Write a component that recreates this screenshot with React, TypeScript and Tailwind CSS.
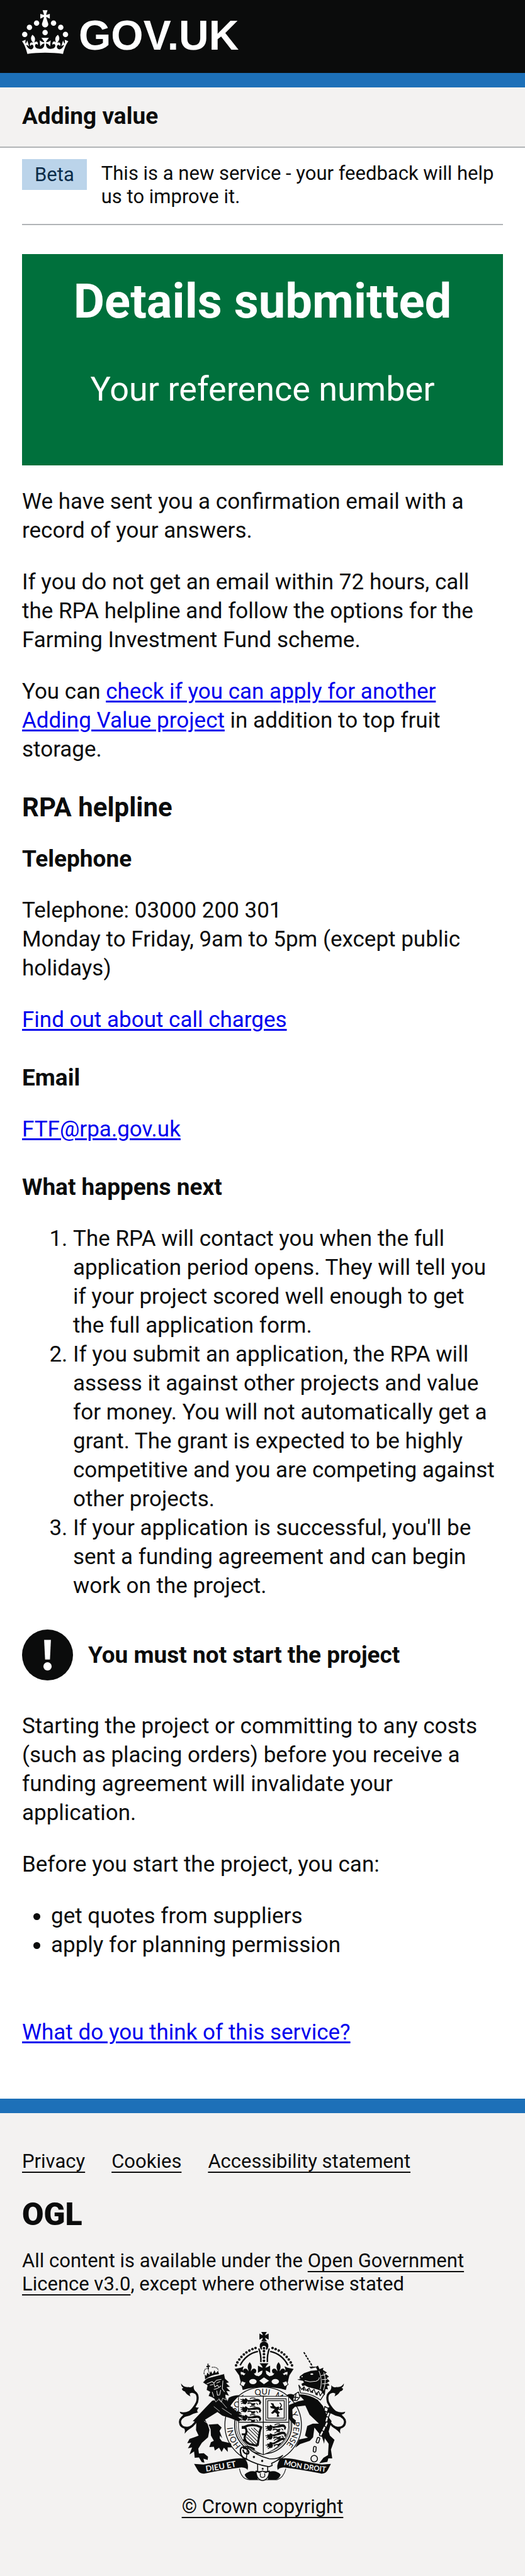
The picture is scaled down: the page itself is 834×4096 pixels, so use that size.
import type { ReactNode } from "react";

const INK = "#0b0c0c";
const PAPER = "#f3f2f1";

function BlueLink({ href, children }: { href: string; children: ReactNode }) {
  return (
    <a href={href} className="text-[#0000ee] underline decoration-[3px] underline-offset-[3px]">
      {children}
    </a>
  );
}

function FooterLink({ href, children }: { href: string; children: ReactNode }) {
  return (
    <a
      href={href}
      className="underline decoration-2 underline-offset-[6px] [text-decoration-skip-ink:none]"
    >
      {children}
    </a>
  );
}

function Crown() {
  return (
    <svg viewBox="0 0 64 60" className="h-[70px] w-[74px] shrink-0" fill="currentColor" aria-hidden="true">
      <circle cx="20" cy="17.6" r="3.7" />
      <circle cx="10.2" cy="23.5" r="3.7" />
      <circle cx="3.7" cy="33.2" r="3.7" />
      <circle cx="31.7" cy="30.6" r="3.7" />
      <circle cx="43.3" cy="17.6" r="3.7" />
      <circle cx="53.2" cy="23.5" r="3.7" />
      <circle cx="59.7" cy="33.2" r="3.7" />
      <path d="M33.1,9.8c.2-.1.3-.3.5-.5l4.6,2.4v-6.8l-4.6,1.5c-.1-.2-.3-.3-.5-.5l1.9-5.9h-6.7l1.9,5.9c-.2.1-.3.3-.5.5l-4.6-1.5v6.8l4.6-2.4c.1.2.3.3.5.5l-2.6,8c-.9,2.8,1.2,5.7,4.1,5.7h0c3,0,5.1-2.9,4.1-5.7l-2.6-8ZM37,37.9s-3.4,3.8-4.1,6.1c2.2,0,4.2-.5,6.4-2.8l-.7,8.5c-2-2.8-4.4-4.1-5.7-3.8.1,3.1.5,6.7,5.8,7.2,3.7.3,6.7-1.5,7-3.8.4-2.6-2-4.3-3.7-1.6-1.4-4.5,2.4-6.1,4.9-3.2-1.9-4.5-1.8-7.7,2.4-10.9,3,4,2.6,7.3-1.2,11.1,2.4-1.3,6.2,0,4,4.6-1.2-2.8-3.7-2.2-4.2.2-.3,1.7.7,3.7,3,4.2,1.9.3,4.7-.9,7-5.9-1.3,0-2.4.7-3.9,1.7l2.4-8c.6,2.3,1.4,3.7,2.2,4.5.6-1.6.5-2.8,0-5.3l5,1.8c-2.6,3.6-5.2,8.7-7.3,17.5-7.4-1.1-15.7-1.7-24.5-1.7h0c-8.8,0-17.1.6-24.5,1.7-2.1-8.9-4.7-13.9-7.3-17.5l5-1.8c-.5,2.5-.6,3.7,0,5.3.8-.8,1.6-2.3,2.2-4.5l2.4,8c-1.5-1-2.6-1.7-3.9-1.7,2.3,5,5.2,6.2,7,5.9,2.3-.4,3.3-2.4,3-4.2-.5-2.4-3-3.1-4.2-.2-2.2-4.6,1.6-6,4-4.6-3.7-3.7-4.2-7.1-1.2-11.1,4.2,3.2,4.3,6.4,2.4,10.9,2.5-2.8,6.3-1.3,4.9,3.2-1.8-2.7-4.1-1-3.7,1.6.3,2.3,3.3,4.1,7,3.8,5.4-.5,5.7-4.2,5.8-7.2-1.3-.2-3.7,1-5.7,3.8l-.7-8.5c2.2,2.3,4.2,2.7,6.4,2.8-.7-2.3-4.1-6.1-4.1-6.1h10.6,0Z" />
    </svg>
  );
}

/* One passant lion of the English quarters, drawn in a 130 x 44 box. */
function Passant({ x, y, tilt = 0 }: { x: number; y: number; tilt?: number }) {
  return (
    <g transform={`translate(${x} ${y}) rotate(${tilt})`}>
      <path d="M14 2 L24 8 L32 0 L44 8 L42 26 L32 38 L18 36 L10 20 Z" />
      <path d="M0 8 L14 12 M2 22 L14 20 M4 34 L18 30" strokeWidth="5" stroke={INK} />
      <path d="M40 10 Q62 16 88 6 Q112 2 122 12 L128 26 L122 40 L114 38 L116 24 L104 20 Q80 24 62 22 L48 26 Z" />
      <path d="M44 34 Q60 26 72 36 L92 34 M66 42 L88 42" fill="none" stroke={INK} strokeWidth="7" />
      <path d="M58 4 Q74 -4 92 2 M98 30 L108 42" fill="none" stroke={INK} strokeWidth="5" />
    </g>
  );
}

function TailPlume() {
  return (
    <g>
      <path
        d="M196 592 Q170 640 135 642 Q92 640 91 604 Q92 578 132 560 Q176 528 196 484 Q208 440 184 422 Q168 414 150 424"
        fill="none"
        stroke={INK}
        strokeWidth="13"
      />
      <path d="M98 367 Q112 392 142 390 Q164 396 176 378 Q172 400 186 416 L204 446 Q180 424 152 424 Q150 438 156 448 Q130 436 122 418 Q100 410 104 398 Q110 398 112 394 Q98 386 98 367 Z" />
      <path d="M184 508 Q188 520 208 516 Q188 540 204 546 Q176 552 150 566 L120 574 Q104 584 98 596 Q98 572 112 560 Q92 556 90 542 Q118 552 146 538 Q172 526 184 508 Z" />
      <path d="M112 640 Q126 650 120 678 Q136 656 164 640 Z" />
    </g>
  );
}

function Fleur({ x }: { x: number }) {
  return (
    <g transform={`translate(${x} 0)`}>
      <path d="M0 236 Q20 258 8 284 L8 294 Q14 274 30 276 Q46 282 38 300 Q34 308 26 304 Q30 320 54 322 L50 336 L-50 336 L-54 322 Q-30 320 -26 304 Q-34 308 -38 300 Q-46 282 -30 276 Q-14 274 -8 294 L-8 284 Q-20 258 0 236 Z" />
    </g>
  );
}

const ARCH_BEADS = [
  [557, 149], [538, 156], [519, 165], [501, 176], [485, 189], [470, 204], [457, 220], [445, 238], [437, 256],
];

const LINKS = [
  [1004, 562, 20], [996, 590, 14], [993, 622, 22], [978, 648, 24], [964, 676, 26], [942, 718, 18], [922, 774, 6],
];

/* Words of the garter and where each begins along the ring. */
const GARTER_WORDS: [string, number][] = [
  ["HONI", 4], ["SOIT", 226], ["QUI", 392], ["MAL", 514], ["Y", 660], ["PENSE", 718],
];

function RoyalArms() {
  return (
    <svg
      viewBox="84 50 1032 920"
      className="h-[237px] w-[266px]"
      fill={INK}
      strokeLinejoin="round"
      role="img"
      aria-label="Royal coat of arms"
    >
      <defs>
        <path id="garter" d="M471 757 A188 188 0 1 1 689 792" />
        <path id="motto-left" d="M252 912 Q360 898 466 874" />
        <path id="motto-right" d="M730 870 Q830 896 990 914" />
        <clipPath id="shield">
          <path d="M452 447 H761 V640 Q752 750 605 808 Q458 750 452 640 Z" />
        </clipPath>
      </defs>

      {/* supporters' tails */}
      <TailPlume />
      <g transform="translate(1200 0) scale(-1 1)">
        <TailPlume />
      </g>

      {/* garter */}
      <path d="M392 456 Q420 440 452 440 L470 470 L400 520 L376 500 Z" />
      <path d="M820 450 Q770 420 750 440 L770 480 L810 470 Z" />
      <ellipse cx="604" cy="624" rx="236" ry="234" fill={PAPER} stroke={INK} strokeWidth="5" />
      <ellipse cx="604" cy="624" rx="176" ry="178" fill="none" stroke={INK} strokeWidth="6" />
      <ellipse cx="604" cy="624" rx="166" ry="168" fill="none" stroke={INK} strokeWidth="3" />
      {GARTER_WORDS.map(([word, offset]) => (
        <text key={word} className="font-['Lato']" fontSize="50">
          <textPath href="#garter" startOffset={offset}>{word}</textPath>
        </text>
      ))}

      {/* crown */}
      <path d="M592 50 H627 Q616 66 616 70 Q622 68 638 60 V98 Q622 88 616 86 Q616 94 628 107 H592 Q602 94 602 86 Q596 88 581 98 V60 Q596 68 602 70 Q602 66 592 50 Z" />
      <path d="M583 140 A27 27 0 1 1 636 140 L630 158 H589 Z" />
      <circle cx="609" cy="148" r="13" fill={PAPER} />
      {ARCH_BEADS.map(([x, y]) => (
        <g key={x}>
          <circle cx={x} cy={y} r="8" />
          <circle cx={1219 - x} cy={y} r="8" />
        </g>
      ))}
      <path d="M462 256 Q498 186 572 170 M757 256 Q721 186 647 170" fill="none" stroke={INK} strokeWidth="9" />
      <path d="M577 152 Q592 190 590 236 M642 152 Q628 190 630 236" fill="none" stroke={INK} strokeWidth="9" />
      {[150, 168, 187, 207, 228].map((y) => (
        <circle key={y} cx="609" cy={y} r="8" />
      ))}
      <path d="M428 278 L466 270 L484 262 L478 282 L484 300 L466 296 Q462 318 484 330 Q609 340 736 330 Q758 318 754 296 L736 300 L742 282 L736 262 L754 270 L792 278 L766 318 L744 408 Q609 372 478 408 L456 318 Z" />
      <path d="M470 310 Q482 318 500 322 L560 328 Q590 322 600 300 H618 Q630 322 660 328 L720 322 L748 310 V350 H470 Z" />
      <Fleur x={521} />
      <Fleur x={699} />
      <path d="M582 243 H637 Q622 260 618 270 Q632 268 647 258 V302 Q632 290 620 288 L626 330 H594 L600 288 Q588 290 572 302 V258 Q588 268 601 270 Q598 260 582 243 Z" />
      <g fill={PAPER}>
        <ellipse cx="541" cy="356" rx="23" ry="16" />
        <ellipse cx="679" cy="356" rx="23" ry="16" />
        <path d="M609 330 L640 351 L609 372 L580 351 Z" />
        <path d="M472 352 L498 362 L484 388 L462 374 Z M748 352 L722 362 L736 388 L758 374 Z" stroke={INK} strokeWidth="4" />
      </g>

      {/* shield */}
      <path d="M452 447 H761 V640 Q752 750 605 808 Q458 750 452 640 Z" fill={PAPER} stroke={INK} strokeWidth="4" />
      <g clipPath="url(#shield)">
        <Passant x={464} y={458} />
        <Passant x={464} y={508} />
        <Passant x={464} y={560} />
        <Passant x={616} y={626} tilt={-6} />
        <Passant x={616} y={682} tilt={-12} />
        <Passant x={616} y={742} tilt={-24} />
        <g fill="none" stroke={INK}>
          <rect x="620" y="462" width="126" height="132" strokeWidth="4" />
          <rect x="632" y="474" width="102" height="108" strokeWidth="5" />
        </g>
        <path d="M650 488 L668 492 L672 504 L684 514 L700 510 L704 520 L694 536 L708 548 L698 556 L704 572 L688 574 L690 556 L676 546 L662 556 L652 550 L666 536 L676 526 L652 520 L646 508 L662 508 Z" />
        <path d="M706 488 Q726 502 708 516 Q718 530 724 524 M700 528 L720 528" fill="none" stroke={INK} strokeWidth="6" />
        <path d="M486 636 Q540 612 592 638 L584 660 Q576 710 570 752 M490 636 Q512 660 492 690 Q482 724 520 742 L568 752" fill="none" stroke={INK} strokeWidth="13" />
        <path d="M588 660 L566 758 M506 662 L572 728 M514 646 L576 708 M530 642 L580 692 M546 642 L584 676 M502 680 L566 744 M500 698 L548 744" fill="none" stroke={INK} strokeWidth="4" />
        <path d="M472 630 H500 V648 H472 Z M472 676 H494 V688 H472 Z M480 712 H500 V724 H480 Z" />
      </g>
      <path d="M605 447 V806 M452 607 H761" stroke={INK} strokeWidth="5" />

      {/* lion */}
      <path d="M290 474 L250 516 L170 600 L192 604 L190 656 L206 690 L184 698 L150 710 L136 736 L160 734 L140 768 L166 762 L150 806 L178 788 L182 826 L208 824 L226 854 L242 856 L236 832 L262 840 L264 820 L238 798 L208 800 L204 770 L226 734 L264 700 L273 655 L262 620 L246 592 L322 544 L352 566 L402 582 L452 602 L472 592 L444 572 L472 578 L474 562 L448 554 L472 556 L462 544 L440 540 L392 496 L376 456 Z" />
      <path d="M268 622 L325 618 L348 640 L335 660 L352 706 L338 690 L336 706 L350 724 L405 737 L410 762 L385 762 L386 790 L362 764 L348 790 L332 764 L306 782 L300 758 L272 760 L282 730 L300 722 L282 690 L280 650 Z" />
      <path
        d="M250 342 L262 334 L364 308 L370 338 L396 362 L378 366 L402 390 L380 392 L404 418 L380 416 L396 446 L372 438 L376 470 L354 458 L346 484 L330 466 L312 482 L302 462 L284 452 L266 446 L276 420 L254 408 L260 380 L232 362 Z"
        stroke={PAPER}
        strokeWidth="3"
      />
      <g fill="none" stroke={PAPER} strokeWidth="4">
        <path d="M256 370 L290 356 L300 366 L316 348 L346 342 M276 378 L296 374 M316 366 L338 356 M300 366 L306 390 L322 378 L330 390 M300 404 Q326 400 344 382 M318 412 L322 440 L336 438 L342 408 M290 420 L300 450 M356 350 L352 400 L366 420" />
        <path d="M330 460 L380 520 M350 520 L410 560 M240 600 L268 618 M300 510 L336 540" strokeWidth="3" />
      </g>
      <path d="M246 342 Q280 316 332 310 L326 290 L312 304 L304 286 L292 310 L282 292 L272 314 L260 300 L254 322 L244 312 Z M260 246 L268 246 L266 256 L276 258 L276 266 L268 264 L270 278 L262 278 L262 266 L254 268 L254 260 L262 258 Z" />
      <path d="M240 310 Q238 274 262 276 M288 268 Q320 264 328 286 M266 278 Q266 294 276 306" fill="none" stroke={INK} strokeWidth="6" strokeDasharray="5 4" />

      {/* unicorn */}
      <path d="M855 175 L908 262" fill="none" stroke={INK} strokeWidth="8" strokeDasharray="14 6" />
      <path d="M830 324 L856 304 L898 290 L938 286 L930 268 L898 276 L888 264 L930 264 L942 258 L952 280 L976 270 L972 284 L998 300 L986 306 L1010 326 L996 334 L1014 354 L1000 362 L1014 380 L998 384 L1004 404 L988 402 L984 440 L960 412 L936 404 L880 390 L862 380 L846 384 L840 370 L856 362 L850 352 L814 344 L836 338 L828 334 Z" />
      <path d="M948 290 Q972 350 956 404 M978 300 Q996 350 976 410 M860 350 L892 358 L930 354 Q952 346 950 330 M960 320 L990 312 M966 344 L1000 342 M968 370 L1004 366" fill="none" stroke={PAPER} strokeWidth="4" />
      <ellipse cx="904" cy="310" rx="9" ry="5" fill={PAPER} />
      <circle cx="844" cy="326" r="4" fill={PAPER} />
      <path d="M824 378 L834 426 Q900 428 958 470 L982 432 L968 424 L956 444 L946 416 L930 436 L918 404 L898 422 L888 396 L868 412 L856 388 L842 406 Z" fill={PAPER} stroke={INK} strokeWidth="5" />
      <path d="M850 394 L856 412 M878 402 L882 418 M906 412 L908 426 M936 424 L936 440" stroke={INK} strokeWidth="9" />
      <path d="M822 436 Q880 432 940 468 L972 506 L996 560 L1026 600 L1008 664 L1016 690 L1044 716 L1022 776 L1030 830 L1006 830 L1000 852 L950 860 L976 826 L1004 810 L1008 740 L984 706 L980 740 L968 700 L920 640 L912 700 L892 722 L832 742 L802 764 L826 714 L880 702 L862 690 L876 630 L910 616 L948 616 L890 560 L864 504 L800 512 L784 528 L786 580 L806 596 L800 626 L776 602 L760 582 L764 500 L820 478 L856 470 Z" />
      <path d="M822 420 L796 436 L786 470 L812 474 L830 452 Z" fill={PAPER} stroke={INK} strokeWidth="5" />
      <path d="M806 430 L800 476 M790 452 L824 456" stroke={INK} strokeWidth="6" />
      <g fill={PAPER} stroke={INK} strokeWidth="6">
        <path d="M984 510 L1006 522 L1000 546 L980 536 Z" />
        {LINKS.map(([x, y, tilt]) => (
          <rect key={y} x={x - 8} y={y - 17} width="16" height="34" rx="6" transform={`rotate(${tilt} ${x} ${y})`} />
        ))}
        <circle cx="919" cy="832" r="20" />
      </g>

      {/* motto scroll */}
      <path d="M458 894 Q470 960 520 962 H690 Q728 952 744 894" fill={PAPER} stroke={INK} strokeWidth="4" />
      <path d="M490 930 Q520 900 560 912 L572 962 H520 Q496 952 490 930 Z M712 930 Q684 900 642 912 L632 962 H684 Q706 952 712 930 Z" />
      <path d="M178 864 L236 868 Q340 850 400 836 Q470 824 494 834 Q518 870 508 902 Q500 888 470 886 Q360 900 240 924 Q212 926 200 902 Z" />
      <path d="M1022 864 L966 868 Q862 850 802 836 Q732 824 708 834 Q684 870 694 902 Q702 888 732 886 Q840 900 962 924 Q990 926 1002 902 Z" />
      <g fill={PAPER} className="font-['Lato'] font-bold">
        <text fontSize="50">
          <textPath href="#motto-left">DIEU ET</textPath>
        </text>
        <text fontSize="45">
          <textPath href="#motto-right">MON DROIT</textPath>
        </text>
      </g>

      {/* belt and buckle */}
      <g fill={PAPER} stroke={INK} strokeWidth="6">
        <path d="M570 850 V912 H632 V850" />
        <path d="M508 764 Q560 812 640 832 Q690 838 724 812 Q690 850 656 860 L660 874 L640 882 Q560 868 500 834 Z" />
        <path d="M560 908 L580 918 L600 908 L620 918 L642 908 Q640 962 600 967 Q562 962 560 908 Z" />
        <path d="M588 922 Q580 946 600 948 Q622 946 612 922" strokeWidth="5" />
      </g>
      <path d="M552 776 Q530 752 480 760 Q460 764 464 790 Q468 830 506 836 M480 768 Q500 764 514 786 Q520 806 500 802 Q482 796 480 776" fill="none" stroke={INK} strokeWidth="9" />
      <circle cx="547" cy="822" r="7" />
      <circle cx="598" cy="846" r="7" />
      <circle cx="601" cy="894" r="6" />
    </svg>
  );
}

export default function App() {
  return (
    <div className="flex min-h-screen flex-col bg-white font-['Roboto',sans-serif] text-[35px] leading-[46px] text-[#0b0c0c]">
      <header>
        <div className="bg-[#0b0c0c] px-[35px] pt-4 pb-[30px] text-white">
          <a href="#home" className="flex h-[70px] items-start gap-4" aria-label="GOV.UK">
            <Crown />
            <span className="font-['Liberation_Sans',sans-serif] text-[66px] leading-[80px] font-bold">GOV.UK</span>
          </a>
        </div>
        <div className="h-[23px] bg-[#1d70b8]" />
        <div className="border-b-2 border-[#b1b4b6] bg-[#f3f2f1] px-[35px] pt-[23px] pb-6">
          <a href="#service" className="text-[37px] leading-[46px] font-bold">Adding value</a>
        </div>
      </header>

      <div className="px-[35px]">
        <div className="flex items-start gap-[23px] border-b-2 border-[#b1b4b6] pt-[18px] pb-[21px] text-[31px] leading-[37px]">
          <strong className="bg-[#bbd4ea] px-[20px] py-[6px] font-normal text-[#0c2d4a]">Beta</strong>
          <span className="py-1">This is a new service - your feedback will help us to improve it.</span>
        </div>
      </div>

      <main className="px-[35px] pt-[46px] pb-[82px]">
        <div className="bg-[#00703c] px-[35px] pt-[35px] pb-[81px] text-center text-white">
          <h1 className="mb-[58px] text-[76px] leading-[81px] font-bold">Details submitted</h1>
          <p className="text-[54px] leading-[81px]">Your reference number</p>
        </div>

        <p className="mt-[35px] mb-9">We have sent you a confirmation email with a record of your answers.</p>
        <p className="mb-9">
          If you do not get an email within 72 hours, call the RPA helpline and follow the options for the Farming
          Investment Fund scheme.
        </p>
        <p>
          You can <BlueLink href="#check">check if you can apply for another Adding Value project</BlueLink> in addition
          to top fruit storage.
        </p>

        <h2 className="mt-[46px] mb-9 text-[42px] leading-[46px] font-bold">RPA helpline</h2>
        <h3 className="mb-9 text-[37px] leading-[46px] font-bold">Telephone</h3>
        <p className="mb-9">
          Telephone: 03000 200 301
          <br />
          Monday to Friday, 9am to 5pm (except public holidays)
        </p>
        <p>
          <BlueLink href="#charges">Find out about call charges</BlueLink>
        </p>

        <h3 className="mt-[46px] mb-9 text-[37px] leading-[46px] font-bold">Email</h3>
        <p>
          <BlueLink href="mailto:FTF@rpa.gov.uk">FTF@rpa.gov.uk</BlueLink>
        </p>

        <h2 className="mt-[46px] mb-9 text-[37px] leading-[46px] font-bold">What happens next</h2>
        <ol className="list-decimal pr-2 pl-[81px]">
          <li>
            The RPA will contact you when the full application period opens. They will tell you if your project scored
            well enough to get the full application form.
          </li>
          <li>
            If you submit an application, the RPA will assess it against other projects and value for money. You will
            not automatically get a grant. The grant is expected to be highly competitive and you are competing against
            other projects.
          </li>
          <li>
            If your application is successful, you'll be sent a funding agreement and can begin work on the project.
          </li>
        </ol>

        <div className="mt-[46px] mb-[50px] flex items-center gap-6">
          <svg viewBox="0 0 105 105" className="size-[81px] shrink-0" aria-hidden="true">
            <circle cx="52.5" cy="52.5" r="52.5" fill={INK} />
            <path d="M45.5 21.5 H59.5 L57.5 62 H47.5 Z" fill="#fff" />
            <circle cx="52.5" cy="76" r="8.5" fill="#fff" />
          </svg>
          <strong className="text-[37px] leading-[46px] font-bold">You must not start the project</strong>
        </div>

        <p className="mb-9">
          Starting the project or committing to any costs (such as placing orders) before you receive a funding
          agreement will invalidate your application.
        </p>
        <p className="mb-9">Before you start the project, you can:</p>
        <ul className="mb-[93px] list-disc pl-[46px]">
          <li>get quotes from suppliers</li>
          <li>apply for planning permission</li>
        </ul>
        <p>
          <BlueLink href="#feedback">What do you think of this service?</BlueLink>
        </p>
      </main>

      <footer className="grow border-t-[23px] border-[#1d70b8] bg-[#f3f2f1] px-[35px] pt-[58px] pb-[92px] text-[31px] leading-[37px]">
        <nav aria-label="Support links">
          <ul className="flex flex-wrap gap-x-[42px]">
            <li><FooterLink href="#privacy">Privacy</FooterLink></li>
            <li><FooterLink href="#cookies">Cookies</FooterLink></li>
            <li><FooterLink href="#accessibility">Accessibility statement</FooterLink></li>
          </ul>
        </nav>
        <div className="mt-[46px] text-[50px] leading-[40px] font-black">OGL</div>
        <p className="mt-[35px]">
          All content is available under the <FooterLink href="#licence">Open Government Licence v3.0</FooterLink>,
          except where otherwise stated
        </p>
        <div className="mt-[58px] flex flex-col items-center gap-[22px]">
          <RoyalArms />
          <FooterLink href="#copyright">© Crown copyright</FooterLink>
        </div>
      </footer>
    </div>
  );
}
